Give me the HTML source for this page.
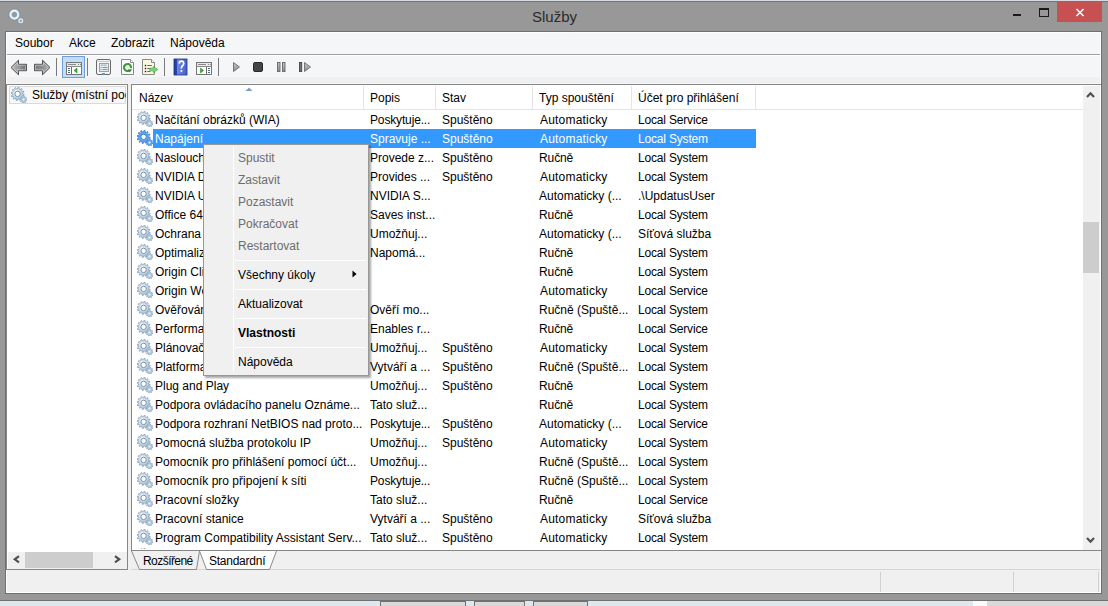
<!DOCTYPE html>
<html><head><meta charset="utf-8"><title>Služby</title>
<style>
*{margin:0;padding:0;box-sizing:border-box}
html,body{width:1108px;height:606px;overflow:hidden}
body{position:relative;background:#989898;font-family:"Liberation Sans",sans-serif;font-size:12px;color:#000}
.a{position:absolute}
.t{white-space:nowrap;line-height:19px;height:19px;color:#000}
.w{color:#fff}
.sel{left:21px;width:603px;height:19px;background:#3399ff}
.mi{position:absolute;white-space:nowrap;line-height:16px;top:35px;color:#000}
.hd{position:absolute;top:1px;height:24px;line-height:17px;padding-top:4px;white-space:nowrap}
.hs{position:absolute;top:1px;width:1px;height:24px;background:#e5e5e5}
.cm{position:absolute;left:34px;white-space:nowrap;line-height:16px;color:#6d6d6d}
.cs{position:absolute;left:31px;width:131px;height:1px;background:#d7d7d7;border-bottom:1px solid #fff}
</style></head><body>
<svg width="0" height="0" style="position:absolute">
 <defs>
  <radialGradient id="gb" cx="0.35" cy="0.3" r="0.8"><stop offset="0" stop-color="#eef7fd"/><stop offset="1" stop-color="#9fc0da"/></radialGradient>
  <symbol id="g" viewBox="0 0 16 16">
   <path d="M6.60 1.90 L7.01 0.31 L8.14 0.48 L8.07 2.12 L9.10 2.57 L10.25 1.40 L11.14 2.11 L10.26 3.50 L10.93 4.40 L12.51 3.97 L12.93 5.03 L11.47 5.78 L11.60 6.90 L13.19 7.31 L13.02 8.44 L11.38 8.37 L10.93 9.40 L12.10 10.55 L11.39 11.44 L10.00 10.56 L9.10 11.23 L9.53 12.81 L8.47 13.23 L7.72 11.77 L6.60 11.90 L6.19 13.49 L5.06 13.32 L5.13 11.68 L4.10 11.23 L2.95 12.40 L2.06 11.69 L2.94 10.30 L2.27 9.40 L0.69 9.83 L0.27 8.77 L1.73 8.02 L1.60 6.90 L0.01 6.49 L0.18 5.36 L1.82 5.43 L2.27 4.40 L1.10 3.25 L1.81 2.36 L3.20 3.24 L4.10 2.57 L3.67 0.99 L4.73 0.57 L5.48 2.03Z" fill="url(#gb)" stroke="#8aa2b8" stroke-width="0.8"/>
   <circle cx="6.6" cy="6.9" r="2.7" fill="#fff" stroke="#7890a8" stroke-width="1"/>
   <path d="M12.50 10.10 L12.82 9.22 L13.68 9.41 L13.58 10.35 L14.27 10.83 L15.12 10.43 L15.59 11.18 L14.86 11.77 L15.00 12.60 L15.88 12.92 L15.69 13.78 L14.75 13.68 L14.27 14.37 L14.67 15.22 L13.92 15.69 L13.33 14.96 L12.50 15.10 L12.18 15.98 L11.32 15.79 L11.42 14.85 L10.73 14.37 L9.88 14.77 L9.41 14.02 L10.14 13.43 L10.00 12.60 L9.12 12.28 L9.31 11.42 L10.25 11.52 L10.73 10.83 L10.33 9.98 L11.08 9.51 L11.67 10.24Z" fill="#b4cde2" stroke="#8aa2b8" stroke-width="0.7"/>
   <circle cx="12.5" cy="12.6" r="1" fill="#e8f2fa"/>
  </symbol>
  <symbol id="gs" viewBox="0 0 16 16">
   <path d="M6.60 1.90 L7.01 0.31 L8.14 0.48 L8.07 2.12 L9.10 2.57 L10.25 1.40 L11.14 2.11 L10.26 3.50 L10.93 4.40 L12.51 3.97 L12.93 5.03 L11.47 5.78 L11.60 6.90 L13.19 7.31 L13.02 8.44 L11.38 8.37 L10.93 9.40 L12.10 10.55 L11.39 11.44 L10.00 10.56 L9.10 11.23 L9.53 12.81 L8.47 13.23 L7.72 11.77 L6.60 11.90 L6.19 13.49 L5.06 13.32 L5.13 11.68 L4.10 11.23 L2.95 12.40 L2.06 11.69 L2.94 10.30 L2.27 9.40 L0.69 9.83 L0.27 8.77 L1.73 8.02 L1.60 6.90 L0.01 6.49 L0.18 5.36 L1.82 5.43 L2.27 4.40 L1.10 3.25 L1.81 2.36 L3.20 3.24 L4.10 2.57 L3.67 0.99 L4.73 0.57 L5.48 2.03Z" fill="#62a6ee" stroke="#3a7fd2" stroke-width="0.8"/>
   <circle cx="6.6" cy="6.9" r="2.7" fill="#fff" stroke="#3a7fd2" stroke-width="1"/>
   <path d="M12.50 10.10 L12.82 9.22 L13.68 9.41 L13.58 10.35 L14.27 10.83 L15.12 10.43 L15.59 11.18 L14.86 11.77 L15.00 12.60 L15.88 12.92 L15.69 13.78 L14.75 13.68 L14.27 14.37 L14.67 15.22 L13.92 15.69 L13.33 14.96 L12.50 15.10 L12.18 15.98 L11.32 15.79 L11.42 14.85 L10.73 14.37 L9.88 14.77 L9.41 14.02 L10.14 13.43 L10.00 12.60 L9.12 12.28 L9.31 11.42 L10.25 11.52 L10.73 10.83 L10.33 9.98 L11.08 9.51 L11.67 10.24Z" fill="#62a6ee" stroke="#3a7fd2" stroke-width="0.7"/>
   <circle cx="12.5" cy="12.6" r="1" fill="#fff"/>
  </symbol>
 </defs>
</svg>

<!-- outer frame strips -->
<div class="a" style="left:0;top:0;width:1108px;height:1px;background:#d5dbe0"></div>
<div class="a" style="left:0;top:1px;width:1108px;height:1px;background:#707575"></div>
<div class="a" style="left:0;top:600px;width:1108px;height:1px;background:#707272"></div>
<div class="a" style="left:0;top:601px;width:973px;height:5px;background:#dce7ee"></div><div class="a" style="left:973px;top:601px;width:14px;height:5px;background:#fafafa"></div><div class="a" style="left:987px;top:601px;width:121px;height:5px;background:#d9d9d9"></div>
<div class="a" style="left:380px;top:601px;width:86px;height:5px;background:#d9d9d9;border:1px solid #707070;border-bottom:0"></div>
<div class="a" style="left:474px;top:601px;width:51px;height:5px;background:#d9d9d9;border:1px solid #707070;border-bottom:0"></div>
<div class="a" style="left:533px;top:601px;width:55px;height:5px;background:#d9d9d9;border:1px solid #707070;border-bottom:0"></div>

<!-- title bar -->
<svg class="a" style="left:4px;top:4px" width="24" height="24" viewBox="0 0 24 24">
 <circle cx="10.4" cy="10.6" r="5.5" fill="none" stroke="#7f93a4" stroke-width="1.9" stroke-dasharray="1.4 1.45"/>
 <circle cx="10.4" cy="10.6" r="3.8" fill="none" stroke="#e3f2fc" stroke-width="2.5"/>
 <circle cx="10.4" cy="10.6" r="2.4" fill="none" stroke="#8aa0b2" stroke-width="0.7"/>
 <circle cx="16.8" cy="16.8" r="2.7" fill="none" stroke="#7f93a4" stroke-width="1.4" stroke-dasharray="1 1.1"/>
 <circle cx="16.8" cy="16.8" r="1.8" fill="none" stroke="#d8e9f5" stroke-width="1.4"/>
</svg>
<div class="a" style="left:532px;top:8px;font-size:15px;line-height:17px;color:#2b2b2b">Služby</div>
<div class="a" style="left:1013px;top:14px;width:8px;height:2px;background:#1a1a1a"></div>
<div class="a" style="left:1039px;top:8px;width:10px;height:9px;border:1px solid #1a1a1a;border-top-width:2px"></div>
<div class="a" style="left:1057px;top:2px;width:45px;height:20px;background:#c75050"></div>
<svg class="a" style="left:1075px;top:8px" width="10" height="9" viewBox="0 0 10 9"><path d="M1.5 1 L8.5 8 M8.5 1 L1.5 8" stroke="#fff" stroke-width="1.6"/></svg>

<!-- client -->
<div class="a" style="left:5px;top:31px;width:1097px;height:563px;background:#f0f0f0;border:1px solid #6f6f6f"></div>
<div class="a" style="left:6px;top:32px;width:1095px;height:561px;border:1px solid #fff"></div>
<!-- menubar -->
<div class="a" style="left:7px;top:33px;width:1093px;height:21px;background:#f5f6f7"></div>
<div class="a" style="left:7px;top:54px;width:1093px;height:1px;background:#a0a0a0"></div>
<div class="a" style="left:7px;top:55px;width:1093px;height:1px;background:#fff"></div>
<div class="mi" style="left:15px">Soubor</div>
<div class="mi" style="left:69px">Akce</div>
<div class="mi" style="left:111px">Zobrazit</div>
<div class="mi" style="left:170px">Nápověda</div>

<!-- toolbar -->
<div class="a" style="left:7px;top:56px;width:1093px;height:21px;background:#f5f6f7"></div>
<div class="a" style="left:7px;top:77px;width:1093px;height:6px;background:#eff0f2"></div><div class="a" style="left:7px;top:83px;width:1093px;height:1px;background:#f6f6f8"></div>

<svg class="a" style="left:0;top:0" width="330" height="84" viewBox="0 0 330 84">
 <defs>
  <linearGradient id="agb" x1="0" y1="0" x2="1" y2="0"><stop offset="0" stop-color="#bdbdbd"/><stop offset="0.55" stop-color="#999"/><stop offset="1" stop-color="#6a6a6a"/></linearGradient><linearGradient id="agf" x1="0" y1="0" x2="1" y2="0"><stop offset="0" stop-color="#7a7a7a"/><stop offset="0.5" stop-color="#8e8e8e"/><stop offset="1" stop-color="#b8b8b8"/></linearGradient>
  <linearGradient id="pg" x1="0" y1="0" x2="0" y2="1"><stop offset="0" stop-color="#c8c8c8"/><stop offset="1" stop-color="#8c8c8c"/></linearGradient>
  <linearGradient id="hb" x1="0" y1="0" x2="1" y2="0"><stop offset="0" stop-color="#1f3a9a"/><stop offset="0.22" stop-color="#2a48b0"/><stop offset="0.23" stop-color="#6f88e4"/><stop offset="1" stop-color="#4560c8"/></linearGradient>
 </defs>
 <!-- back -->
 <path d="M11 67.5 L18.5 60.2 L18.5 64.3 L26.5 64.3 L26.5 70.7 L18.5 70.7 L18.5 74.8Z" fill="url(#agb)" stroke="#4e4e4e" stroke-width="1" stroke-linejoin="round"/>
 <path d="M12.5 67.5 L17.6 62.4 L17.6 65.2 L25.6 65.2 L25.6 69.8 L17.6 69.8 L17.6 72.6Z" fill="none" stroke="#dcdcdc" stroke-width="0.6" stroke-linejoin="round"/>
 <!-- forward -->
 <path d="M50 67.5 L42.5 60.2 L42.5 64.3 L34.5 64.3 L34.5 70.7 L42.5 70.7 L42.5 74.8Z" fill="url(#agf)" stroke="#4e4e4e" stroke-width="1" stroke-linejoin="round"/>
 <path d="M48.5 67.5 L43.4 62.4 L43.4 65.2 L35.4 65.2 L35.4 69.8 L43.4 69.8 L43.4 72.6Z" fill="none" stroke="#dcdcdc" stroke-width="0.6" stroke-linejoin="round"/>
 <rect x="56" y="58" width="1" height="18" fill="#7a7a7a"/>
 <!-- selected button -->
 <rect x="62.5" y="56.5" width="22" height="21" fill="#c2ddf8" stroke="#6e9fdc"/>
 <rect x="66.5" y="62.5" width="15" height="12" fill="#fff" stroke="#777"/>
 <rect x="67" y="63" width="14" height="3" fill="#e8e8e8"/>
 <rect x="68" y="64" width="8" height="1" fill="#8a8a8a"/>
 <rect x="78" y="64" width="1" height="1" fill="#8a8a8a"/><rect x="80" y="64" width="1" height="1" fill="#8a8a8a"/>
 <rect x="67" y="66" width="14" height="1" fill="#8a8a8a"/>
 <rect x="71" y="67" width="1" height="7" fill="#6b6b6b"/>
 <rect x="68" y="68" width="2" height="1" fill="#4a6a8a"/><rect x="68" y="70" width="2" height="1" fill="#4a6a8a"/><rect x="68" y="72" width="2" height="1" fill="#4a6a8a"/>
 <path d="M74 70.5 L77 68 L77 73Z" fill="#3aa63a" stroke="#2e8a2e" stroke-width="0.6"/>
 <rect x="87" y="58" width="1" height="18" fill="#7a7a7a"/>
 <!-- properties -->
 <rect x="96.5" y="59.5" width="14" height="15" rx="1.5" fill="#f4f4f4" stroke="#6a6a6a"/>
 <rect x="98" y="61" width="11" height="1" fill="#c8c8c8"/>
 <rect x="99.5" y="63.5" width="9" height="8" fill="#e8eef4" stroke="#9aa0a8"/>
 <rect x="101" y="64.5" width="2.5" height="1.5" fill="#b0b8c0"/><rect x="104" y="64.5" width="2.5" height="1.5" fill="#b0b8c0"/>
 <rect x="100.5" y="67" width="1" height="1" fill="#4aa0d0"/><rect x="102.5" y="67" width="5" height="1" fill="#8a9098"/>
 <rect x="100.5" y="69" width="1" height="1" fill="#8a9098"/><rect x="102.5" y="69" width="5" height="1" fill="#8a9098"/>
 <rect x="102" y="73" width="3" height="1.5" fill="#3ab0e8"/>
 <!-- refresh doc -->
 <path d="M121.5 59.5 L130.5 59.5 L133.5 62.5 L133.5 74.5 L121.5 74.5Z" fill="#fafafa" stroke="#8a8a8a"/>
 <path d="M130.5 59.5 L130.5 62.5 L133.5 62.5" fill="#fff" stroke="#8a8a8a"/>
 <circle cx="127.5" cy="67.5" r="3.5" fill="none" stroke="#3c9c3c" stroke-width="2.2" stroke-dasharray="18.5 4" transform="rotate(60 127.5 67.5)"/>
 <path d="M127.8 69.6 L132 69.2 L129.8 72.6Z" fill="#2a8a2a"/>
 <!-- export -->
 <path d="M142.5 59.5 L151.5 59.5 L154.5 62.5 L154.5 74.5 L142.5 74.5Z" fill="#fbf6e2" stroke="#8a8a8a"/>
 <path d="M151.5 59.5 L151.5 62.5 L154.5 62.5" fill="#fff" stroke="#8a8a8a"/>
 <rect x="144.8" y="64.8" width="1.4" height="1.4" fill="#222"/><rect x="147.3" y="65" width="4.5" height="1" fill="#666"/>
 <rect x="144.8" y="67.8" width="1.4" height="1.4" fill="#222"/><rect x="147.3" y="68" width="3" height="1" fill="#666"/>
 <rect x="144.8" y="70.8" width="1.4" height="1.4" fill="#222"/><rect x="147.3" y="71" width="3" height="1" fill="#666"/>
 <path d="M149.8 68.2 L153.3 68.2 L153.3 66.5 L157.9 69.5 L153.3 72.5 L153.3 70.8 L149.8 70.8Z" fill="#72dc72" stroke="#46a846" stroke-width="0.7"/>
 <rect x="164" y="58" width="1" height="18" fill="#7a7a7a"/>
 <!-- help -->
 <rect x="174" y="59" width="13" height="16" fill="url(#hb)" stroke="#1e3080" stroke-width="0.8"/>
 <path d="M179.2 63.6 Q179.4 61.2 181.5 61.2 Q183.7 61.2 183.7 63.4 Q183.7 64.9 182.4 65.8 Q181.4 66.6 181.4 68.4" fill="none" stroke="#fff" stroke-width="1.7"/><rect x="180.5" y="70" width="1.8" height="1.8" fill="#fff"/>
 <!-- action pane -->
 <rect x="196.5" y="62.5" width="15" height="12" fill="#fff" stroke="#777"/>
 <rect x="197" y="63" width="14" height="3" fill="#e8e8e8"/>
 <rect x="198" y="64" width="8" height="1" fill="#8a8a8a"/>
 <rect x="208" y="64" width="1" height="1" fill="#8a8a8a"/><rect x="210" y="64" width="1" height="1" fill="#8a8a8a"/>
 <rect x="197" y="66" width="14" height="1" fill="#8a8a8a"/>
 <rect x="206" y="67" width="1" height="7" fill="#6b6b6b"/>
 <rect x="208" y="68" width="2" height="1" fill="#4a6a8a"/><rect x="208" y="70" width="2" height="1" fill="#4a6a8a"/><rect x="208" y="72" width="2" height="1" fill="#4a6a8a"/>
 <path d="M200.5 68 L203.5 70.5 L200.5 73Z" fill="#3aa63a" stroke="#2e8a2e" stroke-width="0.6"/>
 <rect x="218" y="58" width="1" height="18" fill="#7a7a7a"/>
 <!-- play -->
 <path d="M233.5 62.5 L239.5 67 L233.5 71.5Z" fill="url(#pg)" stroke="#777" stroke-linejoin="round"/>
 <!-- stop -->
 <rect x="253.5" y="62.5" width="9" height="9" rx="1.5" fill="#444" stroke="#2a2a2a"/>
 <!-- pause -->
 <rect x="277.5" y="62.5" width="2.5" height="9" fill="url(#pg)" stroke="#666" stroke-width="0.9"/>
 <rect x="282.5" y="62.5" width="2.5" height="9" fill="url(#pg)" stroke="#666" stroke-width="0.9"/>
 <!-- restart -->
 <rect x="299.5" y="62.5" width="2.2" height="9" fill="#777" stroke="#444" stroke-width="0.9"/>
 <path d="M304.5 62.5 L310.5 67 L304.5 71.5Z" fill="url(#pg)" stroke="#777" stroke-linejoin="round"/>
</svg>


<!-- left pane -->
<div class="a" style="left:6px;top:84px;width:122px;height:486px;background:#fff;border:1px solid #868686">
 <div class="a" style="left:2px;top:1px;width:117px;height:18px;background:#f7f7f7;border:1px solid #dadada"></div>
 <svg class="a" style="left:4px;top:2px" width="16" height="16"><use href="#g"/></svg>
 <div class="a t" style="left:25px;top:2px;line-height:17px;height:17px;width:94px;overflow:hidden">Služby (místní počítač)</div>
 <div class="a" style="left:1px;top:467px;width:119px;height:17px;background:#f0f0f0"></div>
 <div class="a" style="left:18px;top:467px;width:68px;height:16px;background:#cdcdcd"></div>
 <svg class="a" style="left:5px;top:470px" width="9" height="9" viewBox="0 0 9 9"><path d="M7 1.2 L2.8 4.3 L7 7.4" fill="none" stroke="#505050" stroke-width="2.2"/></svg>
 <svg class="a" style="left:106px;top:470px" width="9" height="9" viewBox="0 0 9 9"><path d="M2 1.2 L6.2 4.3 L2 7.4" fill="none" stroke="#505050" stroke-width="2.2"/></svg>
</div>

<!-- right pane -->
<div class="a" style="left:131px;top:84px;width:970px;height:467px;background:#fff;border:1px solid #868686;border-right:0;overflow:hidden">
 <div class="a" style="left:0;top:24px;width:951px;height:1px;background:#e5e5e5"></div>
 <div class="hd" style="left:7px">Název</div>
 <svg class="a" style="left:113px;top:2px" width="9" height="5" viewBox="0 0 9 5"><path d="M0.5 4 L4 0.6 L7.5 4Z" fill="#7f9fbf"/></svg>
 <div class="hs" style="left:231px"></div>
 <div class="hd" style="left:238px">Popis</div>
 <div class="hs" style="left:303px"></div>
 <div class="hd" style="left:310px">Stav</div>
 <div class="hs" style="left:400px"></div>
 <div class="hd" style="left:407px">Typ spouštění</div>
 <div class="hs" style="left:499px"></div>
 <div class="hd" style="left:506px">Účet pro přihlášení</div>
 <div class="hs" style="left:623px"></div>
 <div class="a" style="left:0;top:25px;width:951px;height:439px;overflow:hidden">
  <div class="a" style="left:0;top:-25px;width:951px;height:600px"><svg class="a gi" style="left:5px;top:26px" width="16" height="16"><use href="#g"/></svg><div class="a t" style="left:23px;top:26px">Načítání obrázků (WIA)</div><div class="a t" style="left:238px;top:26px;letter-spacing:-0.15px">Poskytuje...</div><div class="a t" style="left:310px;top:26px">Spuštěno</div><div class="a t" style="left:408px;top:26px;letter-spacing:0.20px">Automaticky</div><div class="a t" style="left:506px;top:26px;letter-spacing:-0.18px">Local Service</div><div class="a sel" style="top:44px"></div><svg class="a gi" style="left:5px;top:45px" width="16" height="16"><use href="#gs"/></svg><div class="a t w" style="left:23px;top:45px">Napájení</div><div class="a t w" style="left:238px;top:45px">Spravuje ...</div><div class="a t w" style="left:310px;top:45px">Spuštěno</div><div class="a t w" style="left:408px;top:45px;letter-spacing:0.20px">Automaticky</div><div class="a t w" style="left:506px;top:45px;letter-spacing:-0.18px">Local System</div><svg class="a gi" style="left:5px;top:64px" width="16" height="16"><use href="#g"/></svg><div class="a t" style="left:23px;top:64px">Naslouchací služba sdíl...</div><div class="a t" style="left:238px;top:64px">Provede z...</div><div class="a t" style="left:310px;top:64px">Spuštěno</div><div class="a t" style="left:407px;top:64px;letter-spacing:-0.10px">Ručně</div><div class="a t" style="left:506px;top:64px;letter-spacing:-0.18px">Local System</div><svg class="a gi" style="left:5px;top:83px" width="16" height="16"><use href="#g"/></svg><div class="a t" style="left:23px;top:83px">NVIDIA Display Driver S...</div><div class="a t" style="left:238px;top:83px">Provides ...</div><div class="a t" style="left:310px;top:83px">Spuštěno</div><div class="a t" style="left:408px;top:83px;letter-spacing:0.20px">Automaticky</div><div class="a t" style="left:506px;top:83px;letter-spacing:-0.18px">Local System</div><svg class="a gi" style="left:5px;top:102px" width="16" height="16"><use href="#g"/></svg><div class="a t" style="left:23px;top:102px">NVIDIA Update Service D...</div><div class="a t" style="left:238px;top:102px">NVIDIA S...</div><div class="a t" style="left:407px;top:102px">Automaticky (...</div><div class="a t" style="left:506px;top:102px">.\UpdatusUser</div><svg class="a gi" style="left:5px;top:121px" width="16" height="16"><use href="#g"/></svg><div class="a t" style="left:23px;top:121px">Office 64 Source Engine</div><div class="a t" style="left:238px;top:121px">Saves inst...</div><div class="a t" style="left:407px;top:121px;letter-spacing:-0.10px">Ručně</div><div class="a t" style="left:506px;top:121px;letter-spacing:-0.18px">Local System</div><svg class="a gi" style="left:5px;top:140px" width="16" height="16"><use href="#g"/></svg><div class="a t" style="left:23px;top:140px">Ochrana softwaru</div><div class="a t" style="left:238px;top:140px">Umožňuj...</div><div class="a t" style="left:407px;top:140px">Automaticky (...</div><div class="a t" style="left:506px;top:140px">Síťová služba</div><svg class="a gi" style="left:5px;top:159px" width="16" height="16"><use href="#g"/></svg><div class="a t" style="left:23px;top:159px">Optimalizace jednotek</div><div class="a t" style="left:238px;top:159px">Napomá...</div><div class="a t" style="left:407px;top:159px;letter-spacing:-0.10px">Ručně</div><div class="a t" style="left:506px;top:159px;letter-spacing:-0.18px">Local System</div><svg class="a gi" style="left:5px;top:178px" width="16" height="16"><use href="#g"/></svg><div class="a t" style="left:23px;top:178px">Origin Client Service</div><div class="a t" style="left:407px;top:178px;letter-spacing:-0.10px">Ručně</div><div class="a t" style="left:506px;top:178px;letter-spacing:-0.18px">Local System</div><svg class="a gi" style="left:5px;top:197px" width="16" height="16"><use href="#g"/></svg><div class="a t" style="left:23px;top:197px">Origin Web Helper Service</div><div class="a t" style="left:408px;top:197px;letter-spacing:0.20px">Automaticky</div><div class="a t" style="left:506px;top:197px;letter-spacing:-0.18px">Local Service</div><svg class="a gi" style="left:5px;top:216px" width="16" height="16"><use href="#g"/></svg><div class="a t" style="left:23px;top:216px">Ověřování identity aplik...</div><div class="a t" style="left:238px;top:216px">Ověří mo...</div><div class="a t" style="left:407px;top:216px">Ručně (Spuště...</div><div class="a t" style="left:506px;top:216px;letter-spacing:-0.18px">Local System</div><svg class="a gi" style="left:5px;top:235px" width="16" height="16"><use href="#g"/></svg><div class="a t" style="left:23px;top:235px">Performance Counter DLL...</div><div class="a t" style="left:238px;top:235px">Enables r...</div><div class="a t" style="left:407px;top:235px;letter-spacing:-0.10px">Ručně</div><div class="a t" style="left:506px;top:235px;letter-spacing:-0.18px">Local Service</div><svg class="a gi" style="left:5px;top:254px" width="16" height="16"><use href="#g"/></svg><div class="a t" style="left:23px;top:254px">Plánovač úloh</div><div class="a t" style="left:238px;top:254px">Umožňuj...</div><div class="a t" style="left:310px;top:254px">Spuštěno</div><div class="a t" style="left:408px;top:254px;letter-spacing:0.20px">Automaticky</div><div class="a t" style="left:506px;top:254px;letter-spacing:-0.18px">Local System</div><svg class="a gi" style="left:5px;top:273px" width="16" height="16"><use href="#g"/></svg><div class="a t" style="left:23px;top:273px">Platforma připojených z...</div><div class="a t" style="left:238px;top:273px">Vytváří a ...</div><div class="a t" style="left:310px;top:273px">Spuštěno</div><div class="a t" style="left:407px;top:273px">Ručně (Spuště...</div><div class="a t" style="left:506px;top:273px;letter-spacing:-0.18px">Local System</div><svg class="a gi" style="left:5px;top:292px" width="16" height="16"><use href="#g"/></svg><div class="a t" style="left:23px;top:292px">Plug and Play</div><div class="a t" style="left:238px;top:292px">Umožňuj...</div><div class="a t" style="left:310px;top:292px">Spuštěno</div><div class="a t" style="left:407px;top:292px;letter-spacing:-0.10px">Ručně</div><div class="a t" style="left:506px;top:292px;letter-spacing:-0.18px">Local System</div><svg class="a gi" style="left:5px;top:311px" width="16" height="16"><use href="#g"/></svg><div class="a t" style="left:23px;top:311px">Podpora ovládacího panelu Oznáme...</div><div class="a t" style="left:238px;top:311px">Tato služ...</div><div class="a t" style="left:407px;top:311px;letter-spacing:-0.10px">Ručně</div><div class="a t" style="left:506px;top:311px;letter-spacing:-0.18px">Local System</div><svg class="a gi" style="left:5px;top:330px" width="16" height="16"><use href="#g"/></svg><div class="a t" style="left:23px;top:330px">Podpora rozhraní NetBIOS nad proto...</div><div class="a t" style="left:238px;top:330px;letter-spacing:-0.15px">Poskytuje...</div><div class="a t" style="left:310px;top:330px">Spuštěno</div><div class="a t" style="left:407px;top:330px">Automaticky (...</div><div class="a t" style="left:506px;top:330px;letter-spacing:-0.18px">Local Service</div><svg class="a gi" style="left:5px;top:349px" width="16" height="16"><use href="#g"/></svg><div class="a t" style="left:23px;top:349px">Pomocná služba protokolu IP</div><div class="a t" style="left:238px;top:349px">Umožňuj...</div><div class="a t" style="left:310px;top:349px">Spuštěno</div><div class="a t" style="left:408px;top:349px;letter-spacing:0.20px">Automaticky</div><div class="a t" style="left:506px;top:349px;letter-spacing:-0.18px">Local System</div><svg class="a gi" style="left:5px;top:368px" width="16" height="16"><use href="#g"/></svg><div class="a t" style="left:23px;top:368px">Pomocník pro přihlášení pomocí účt...</div><div class="a t" style="left:238px;top:368px">Umožňuj...</div><div class="a t" style="left:407px;top:368px">Ručně (Spuště...</div><div class="a t" style="left:506px;top:368px;letter-spacing:-0.18px">Local System</div><svg class="a gi" style="left:5px;top:387px" width="16" height="16"><use href="#g"/></svg><div class="a t" style="left:23px;top:387px">Pomocník pro připojení k síti</div><div class="a t" style="left:238px;top:387px;letter-spacing:-0.15px">Poskytuje...</div><div class="a t" style="left:407px;top:387px">Ručně (Spuště...</div><div class="a t" style="left:506px;top:387px;letter-spacing:-0.18px">Local System</div><svg class="a gi" style="left:5px;top:406px" width="16" height="16"><use href="#g"/></svg><div class="a t" style="left:23px;top:406px">Pracovní složky</div><div class="a t" style="left:238px;top:406px">Tato služ...</div><div class="a t" style="left:407px;top:406px;letter-spacing:-0.10px">Ručně</div><div class="a t" style="left:506px;top:406px;letter-spacing:-0.18px">Local Service</div><svg class="a gi" style="left:5px;top:425px" width="16" height="16"><use href="#g"/></svg><div class="a t" style="left:23px;top:425px">Pracovní stanice</div><div class="a t" style="left:238px;top:425px">Vytváří a ...</div><div class="a t" style="left:310px;top:425px">Spuštěno</div><div class="a t" style="left:408px;top:425px;letter-spacing:0.20px">Automaticky</div><div class="a t" style="left:506px;top:425px">Síťová služba</div><svg class="a gi" style="left:5px;top:444px" width="16" height="16"><use href="#g"/></svg><div class="a t" style="left:23px;top:444px">Program Compatibility Assistant Serv...</div><div class="a t" style="left:238px;top:444px">Tato služ...</div><div class="a t" style="left:310px;top:444px">Spuštěno</div><div class="a t" style="left:408px;top:444px;letter-spacing:0.20px">Automaticky</div><div class="a t" style="left:506px;top:444px;letter-spacing:-0.18px">Local System</div><svg class="a gi" style="left:5px;top:463px" width="16" height="16"><use href="#g"/></svg><div class="a t" style="left:23px;top:463px">Profil uživatele</div></div>
 </div>
 <!-- v scrollbar -->
 <div class="a" style="left:951px;top:1px;width:17px;height:465px;background:#f0f0f0"></div>
 <div class="a" style="left:951px;top:137px;width:16px;height:51px;background:#cdcdcd"></div>
 <svg class="a" style="left:954px;top:6px" width="9" height="8" viewBox="0 0 9 8"><path d="M1 6 L4.5 2.3 L8 6" fill="none" stroke="#505050" stroke-width="2.2"/></svg>
 <svg class="a" style="left:954px;top:451px" width="9" height="8" viewBox="0 0 9 8"><path d="M1 2 L4.5 5.7 L8 2" fill="none" stroke="#505050" stroke-width="2.2"/></svg>
</div>

<!-- status bar -->
<div class="a" style="left:131px;top:569px;width:969px;height:1px;background:#d5d5d5"></div>
<div class="a" style="left:880px;top:572px;width:1px;height:20px;background:#d0d0d0"></div><div class="a" style="left:1013px;top:572px;width:1px;height:20px;background:#d0d0d0"></div><div class="a" style="left:1098px;top:572px;width:1px;height:20px;background:#d0d0d0"></div>

<!-- tabs -->
<svg class="a" style="left:131px;top:550px" width="150" height="21" viewBox="0 0 150 21">
 <path d="M0.5 1 L8.5 19.5 L65.5 19.5 L68.5 1" fill="#f0f0f0" stroke="#8a8a8a" stroke-width="1"/>
 <path d="M68.5 1 L75.5 19.5 L138.5 19.5 L145.5 1" fill="#fff" stroke="#8a8a8a" stroke-width="1"/>
</svg>
<div class="a t" style="left:143px;top:552px;line-height:18px;height:18px;letter-spacing:-0.55px">Rozšířené</div>
<div class="a t" style="left:209px;top:552px;line-height:18px;height:18px;letter-spacing:-0.25px">Standardní</div>

<!-- context menu -->
<div class="a" style="left:203px;top:144px;width:166px;height:232px;background:#f0f0f0;border:1px solid #979797;box-shadow:2px 2px 2px rgba(0,0,0,0.35)">
 <div class="a" style="left:29px;top:2px;width:1px;height:225px;background:#e2e3e3;border-right:1px solid #fff"></div>
 <div class="cm" style="top:5px">Spustit</div>
 <div class="cm" style="top:27px">Zastavit</div>
 <div class="cm" style="top:49px">Pozastavit</div>
 <div class="cm" style="top:71px">Pokračovat</div>
 <div class="cm" style="top:93px">Restartovat</div>
 <div class="cs" style="top:115px"></div>
 <div class="cm" style="top:122px;color:#000">Všechny úkoly</div>
 <svg class="a" style="left:148px;top:125px" width="5" height="8" viewBox="0 0 5 8"><path d="M0.5 0.5 L4.5 4 L0.5 7.5Z" fill="#000"/></svg>
 <div class="cs" style="top:144px"></div>
 <div class="cm" style="top:151px;color:#000">Aktualizovat</div>
 <div class="cs" style="top:173px"></div>
 <div class="cm" style="top:180px;color:#000;font-weight:bold">Vlastnosti</div>
 <div class="cs" style="top:202px"></div>
 <div class="cm" style="top:209px;color:#000">Nápověda</div>
</div>
</body></html>
